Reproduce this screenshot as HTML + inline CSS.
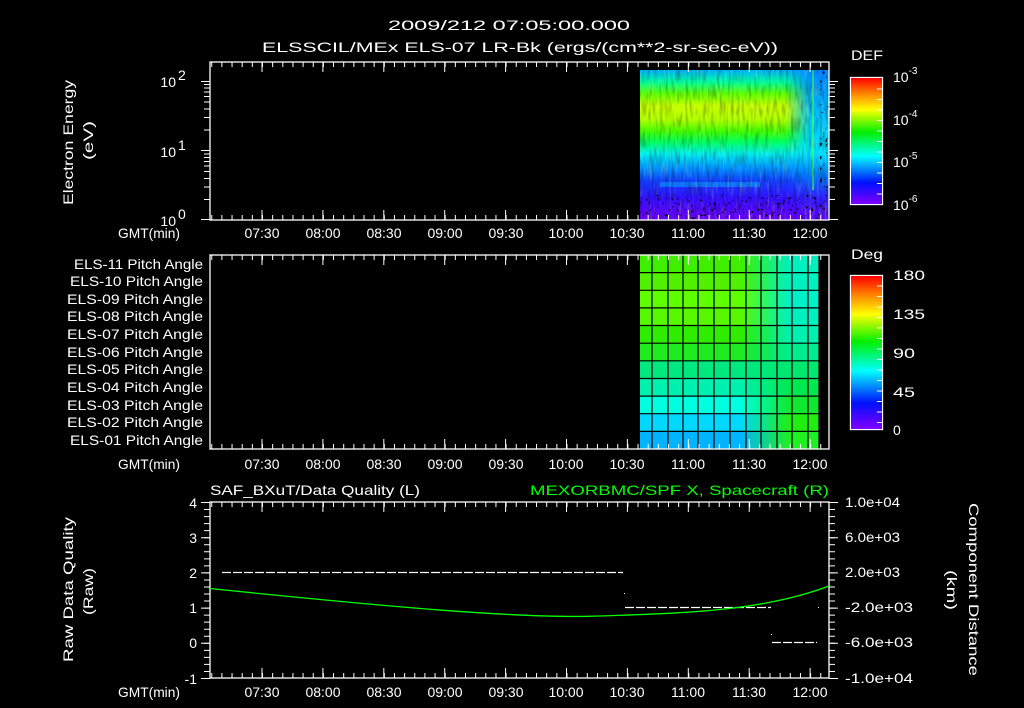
<!DOCTYPE html>
<html><head><meta charset="utf-8"><style>
html,body{margin:0;padding:0;background:#000;}
svg{display:block}
text{font-family:"Liberation Sans","DejaVu Sans",sans-serif;fill:#fff;font-size:14px}
</style></head><body>
<svg width="1024" height="708" viewBox="0 0 1024 708" xmlns="http://www.w3.org/2000/svg">
<defs>
<linearGradient id="cb" x1="0" y1="1" x2="0" y2="0">
<stop offset="0" stop-color="#8000ff"/><stop offset="0.17" stop-color="#0010ff"/>
<stop offset="0.38" stop-color="#00ffff"/><stop offset="0.57" stop-color="#00f000"/>
<stop offset="0.75" stop-color="#ffff00"/><stop offset="0.88" stop-color="#ff8000"/>
<stop offset="1" stop-color="#ff0000"/></linearGradient>
<linearGradient id="sg" x1="0" y1="0" x2="0" y2="1">
<stop offset="0" stop-color="#00b0ff"/><stop offset="0.08" stop-color="#00ffa0"/>
<stop offset="0.16" stop-color="#60ff00"/><stop offset="0.24" stop-color="#c8ff00"/>
<stop offset="0.33" stop-color="#b0ff00"/><stop offset="0.41" stop-color="#40ff00"/>
<stop offset="0.48" stop-color="#00ff60"/><stop offset="0.56" stop-color="#00f0f0"/>
<stop offset="0.64" stop-color="#00a0ff"/><stop offset="0.74" stop-color="#1040ff"/>
<stop offset="0.85" stop-color="#3010ff"/><stop offset="1" stop-color="#7000ff"/></linearGradient>
<linearGradient id="sgr" x1="0" y1="0" x2="0" y2="1">
<stop offset="0" stop-color="#0080ff"/><stop offset="0.3" stop-color="#00c0ff"/>
<stop offset="0.55" stop-color="#00e0ff"/><stop offset="0.7" stop-color="#0080ff"/>
<stop offset="0.85" stop-color="#3020ff"/><stop offset="1" stop-color="#6000ff"/></linearGradient>
<linearGradient id="fade" x1="0" y1="0" x2="1" y2="0">
<stop offset="0" stop-color="#fff" stop-opacity="0"/><stop offset="0.6" stop-color="#fff" stop-opacity="1"/></linearGradient>
<mask id="fm"><rect x="785" y="70" width="44" height="150" fill="url(#fade)"/></mask>
<filter id="nz" x="0" y="0" width="100%" height="100%">
<feTurbulence type="fractalNoise" baseFrequency="0.35 0.06" numOctaves="2" seed="3"/>
<feColorMatrix type="matrix" values="0 0 0 0 0  0 0 0 0 0  0 0 0 0 0  2 0 0 0 -0.9"/>
</filter>
<filter id="nz2" x="0" y="0" width="100%" height="100%">
<feTurbulence type="fractalNoise" baseFrequency="0.35 0.35" numOctaves="1" seed="9"/>
<feColorMatrix type="matrix" values="0 0 0 0 0  0 0 0 0 0  0 0 0 0 0  9 0 0 0 -5.6"/>
</filter>
<filter id="nz3" x="0" y="0" width="100%" height="100%">
<feTurbulence type="fractalNoise" baseFrequency="0.4 0.05" numOctaves="2" seed="5"/>
<feColorMatrix type="matrix" values="0 0 0 0 1  0 0 0 0 1  0 0 0 0 0.3  2.5 0 0 0 -1.4"/>
</filter>
<linearGradient id="pg0" x1="740" x2="790" gradientUnits="userSpaceOnUse"><stop offset="0" stop-color="#40ee00"/><stop offset="1" stop-color="#00f0c0"/></linearGradient>
<linearGradient id="pg1" x1="740" x2="790" gradientUnits="userSpaceOnUse"><stop offset="0" stop-color="#50f000"/><stop offset="1" stop-color="#00f0c0"/></linearGradient>
<linearGradient id="pg2" x1="740" x2="790" gradientUnits="userSpaceOnUse"><stop offset="0" stop-color="#60ff00"/><stop offset="1" stop-color="#00f0c8"/></linearGradient>
<linearGradient id="pg3" x1="740" x2="790" gradientUnits="userSpaceOnUse"><stop offset="0" stop-color="#58f800"/><stop offset="1" stop-color="#00f0c0"/></linearGradient>
<linearGradient id="pg4" x1="740" x2="790" gradientUnits="userSpaceOnUse"><stop offset="0" stop-color="#30ec00"/><stop offset="1" stop-color="#00f0b0"/></linearGradient>
<linearGradient id="pg5" x1="740" x2="790" gradientUnits="userSpaceOnUse"><stop offset="0" stop-color="#20ea20"/><stop offset="1" stop-color="#00ec90"/></linearGradient>
<linearGradient id="pg6" x1="740" x2="790" gradientUnits="userSpaceOnUse"><stop offset="0" stop-color="#00e880"/><stop offset="1" stop-color="#00e870"/></linearGradient>
<linearGradient id="pg7" x1="740" x2="790" gradientUnits="userSpaceOnUse"><stop offset="0" stop-color="#00f0b0"/><stop offset="1" stop-color="#00e850"/></linearGradient>
<linearGradient id="pg8" x1="740" x2="790" gradientUnits="userSpaceOnUse"><stop offset="0" stop-color="#00ffe0"/><stop offset="1" stop-color="#10e830"/></linearGradient>
<linearGradient id="pg9" x1="740" x2="790" gradientUnits="userSpaceOnUse"><stop offset="0" stop-color="#00d8ff"/><stop offset="1" stop-color="#20ee10"/></linearGradient>
<linearGradient id="pg10" x1="740" x2="790" gradientUnits="userSpaceOnUse"><stop offset="0" stop-color="#00b4ff"/><stop offset="1" stop-color="#20f020"/></linearGradient>
</defs>
<rect width="1024" height="708" fill="#000"/>

<!-- spectrogram -->
<rect x="640" y="70" width="189" height="150" fill="url(#sg)"/>
<rect x="785" y="70" width="44" height="150" fill="url(#sgr)" mask="url(#fm)"/>
<rect x="660" y="182" width="100" height="5" fill="#00c0ff" opacity="0.45"/>
<rect x="812" y="70" width="2" height="120" fill="#30ff60" opacity="0.7"/>
<rect x="640" y="70" width="189" height="150" filter="url(#nz3)" opacity="0.3"/>
<rect x="640" y="70" width="189" height="150" filter="url(#nz)" opacity="0.35"/>
<rect x="640" y="195" width="189" height="25" filter="url(#nz2)"/>
<rect x="820" y="70" width="9" height="150" filter="url(#nz2)"/>

<!-- pitch cells -->
<rect x="640" y="255" width="179" height="18.1" fill="url(#pg0)"/>
<rect x="640" y="272.6" width="179" height="18.1" fill="url(#pg1)"/>
<rect x="640" y="290.3" width="179" height="18.1" fill="url(#pg2)"/>
<rect x="640" y="307.9" width="179" height="18.1" fill="url(#pg3)"/>
<rect x="640" y="325.5" width="179" height="18.1" fill="url(#pg4)"/>
<rect x="640" y="343.2" width="179" height="18.1" fill="url(#pg5)"/>
<rect x="640" y="360.8" width="179" height="18.1" fill="url(#pg6)"/>
<rect x="640" y="378.5" width="179" height="18.1" fill="url(#pg7)"/>
<rect x="640" y="396.1" width="179" height="18.1" fill="url(#pg8)"/>
<rect x="640" y="413.7" width="179" height="18.1" fill="url(#pg9)"/>
<rect x="640" y="431.4" width="179" height="17.6" fill="url(#pg10)"/>
<g stroke="#000" stroke-width="1.2">
<path d="M640 272.6H819M640 290.3H819M640 307.9H819M640 325.5H819M640 343.2H819M640 360.8H819M640 378.5H819M640 396.1H819M640 413.7H819M640 431.4H819"/>
<path d="M652 255V449M668 255V449M683 255V449M698 255V449M714 255V449M730 255V449M746 255V449M761 255V449M777 255V449M792 255V449M808 255V449M819 255V449"/>
</g>

<!-- time ticks -->
<g stroke="#fff" fill="none">
<g stroke-dasharray="1 9.15" stroke-width="5">
<line x1="211.25" y1="64.5" x2="829" y2="64.5"/><line x1="211.25" y1="217.5" x2="829" y2="217.5"/>
<line x1="211.25" y1="257.5" x2="829" y2="257.5"/><line x1="211.25" y1="446.5" x2="829" y2="446.5"/>
<line x1="211.25" y1="504.5" x2="829" y2="504.5"/><line x1="211.25" y1="675.5" x2="829" y2="675.5"/>
</g>
<g stroke-dasharray="1 59.9" stroke-width="10">
<line x1="261.5" y1="67" x2="829" y2="67"/><line x1="261.5" y1="215" x2="829" y2="215"/>
<line x1="261.5" y1="260" x2="829" y2="260"/><line x1="261.5" y1="444" x2="829" y2="444"/>
<line x1="261.5" y1="507" x2="829" y2="507"/><line x1="261.5" y1="673" x2="829" y2="673"/>
</g>
<path stroke-width="1" d="M201 81.5H210M204 84.5H210M204 88H210M204 92H210M204 96.5H210M204 102H210M204 109H210M204 117.5H210M204 130H210M201 150.5H210M204 154H210M204 157.5H210M204 161.5H210M204 166H210M204 171.5H210M204 178.5H210M204 187H210M204 199.5H210M201 219.5H210
M838 81.5H829M835 84.5H829M835 88H829M835 92H829M835 96.5H829M835 102H829M835 109H829M835 117.5H829M835 130H829M838 150.5H829M835 154H829M835 157.5H829M835 161.5H829M835 166H829M835 171.5H829M835 178.5H829M835 187H829M835 199.5H829M838 219.5H829"/>
<g stroke-dasharray="1 6.04" stroke-width="6">
<line x1="207" y1="502" x2="207" y2="679"/><line x1="832" y1="502" x2="832" y2="679"/>
</g>
<g stroke-dasharray="1 34.2" stroke-width="9">
<line x1="205.5" y1="502" x2="205.5" y2="679"/><line x1="833.5" y1="502" x2="833.5" y2="679"/>
</g>
</g>

<!-- frames -->
<g stroke="#fff" fill="none" stroke-width="1.3">
<rect x="210" y="62" width="619" height="158"/>
<rect x="210" y="255" width="619" height="194"/>
<rect x="210" y="502" width="619" height="176"/>
<rect x="850.5" y="77.5" width="32" height="127"/>
<rect x="850.5" y="275.5" width="32" height="154"/>
</g>
<rect x="851" y="78" width="31" height="126" fill="url(#cb)"/>
<rect x="851" y="276" width="31" height="153" fill="url(#cb)"/>
<g stroke="#fff" stroke-dasharray="1 9.5" stroke-width="5">
<line x1="879.5" y1="88.5" x2="879.5" y2="204"/>
<line x1="879.5" y1="285.5" x2="879.5" y2="429"/>
</g>

<!-- bottom panel data -->
<g stroke="#fff" stroke-width="1.2">
<line x1="222" y1="572.5" x2="623" y2="572.5" stroke-dasharray="9,2"/>
<line x1="625" y1="607.5" x2="771" y2="607.5" stroke-dasharray="9,2"/>
<line x1="772" y1="642.5" x2="817" y2="642.5" stroke-dasharray="9,2"/>
</g>
<rect x="624" y="593" width="1" height="1" fill="#fff"/>
<rect x="771" y="634" width="1" height="1" fill="#fff"/>
<rect x="818" y="607" width="1" height="1" fill="#fff"/>
<path d="M210 588.5 C 380 606, 520 619, 600 616 C 680 613, 760 612, 829 586" stroke="#00ff00" stroke-width="1.3" fill="none"/>

<!-- titles -->
<text x="388" y="30" font-size="16" textLength="242" lengthAdjust="spacingAndGlyphs">2009/212 07:05:00.000</text>
<text x="262" y="52" font-size="16" textLength="516" lengthAdjust="spacingAndGlyphs">ELSSCIL/MEx ELS-07 LR-Bk  (ergs/(cm**2-sr-sec-eV))</text>
<text x="851" y="60" font-size="16" textLength="32" lengthAdjust="spacingAndGlyphs">DEF</text>
<text x="851" y="259" font-size="16" textLength="32" lengthAdjust="spacingAndGlyphs">Deg</text>
<g font-size="16">
<text x="893" y="82">10<tspan font-size="10" dy="-8">-3</tspan></text>
<text x="893" y="125">10<tspan font-size="10" dy="-8">-4</tspan></text>
<text x="893" y="167">10<tspan font-size="10" dy="-8">-5</tspan></text>
<text x="893" y="210">10<tspan font-size="10" dy="-8">-6</tspan></text>
<text x="893" y="280" textLength="32" lengthAdjust="spacingAndGlyphs">180</text>
<text x="893" y="319" textLength="32" lengthAdjust="spacingAndGlyphs">135</text>
<text x="893" y="358" textLength="22" lengthAdjust="spacingAndGlyphs">90</text>
<text x="893" y="397" textLength="22" lengthAdjust="spacingAndGlyphs">45</text>
<text x="893" y="435">0</text>
</g>
<g font-size="14">
<text x="176" y="87" text-anchor="end">10</text><text x="178" y="80" font-size="9">2</text>
<text x="176" y="157" text-anchor="end">10</text><text x="178" y="150" font-size="9">1</text>
<text x="176" y="226" text-anchor="end">10</text><text x="178" y="219" font-size="9">0</text>
</g>
<text transform="translate(73,205) rotate(-90)" font-size="15" textLength="125" lengthAdjust="spacingAndGlyphs">Electron Energy</text>
<text transform="translate(93,160) rotate(-90)" font-size="15" textLength="39" lengthAdjust="spacingAndGlyphs">(eV)</text>
<g font-size="14">
<text x="74" y="269" textLength="129" lengthAdjust="spacingAndGlyphs">ELS-11 Pitch Angle</text>
<text x="70" y="286" textLength="133" lengthAdjust="spacingAndGlyphs">ELS-10 Pitch Angle</text>
<text x="67" y="304" textLength="136" lengthAdjust="spacingAndGlyphs">ELS-09 Pitch Angle</text>
<text x="67" y="321" textLength="136" lengthAdjust="spacingAndGlyphs">ELS-08 Pitch Angle</text>
<text x="67" y="339" textLength="136" lengthAdjust="spacingAndGlyphs">ELS-07 Pitch Angle</text>
<text x="67" y="357" textLength="136" lengthAdjust="spacingAndGlyphs">ELS-06 Pitch Angle</text>
<text x="67" y="374" textLength="136" lengthAdjust="spacingAndGlyphs">ELS-05 Pitch Angle</text>
<text x="67" y="392" textLength="136" lengthAdjust="spacingAndGlyphs">ELS-04 Pitch Angle</text>
<text x="67" y="410" textLength="136" lengthAdjust="spacingAndGlyphs">ELS-03 Pitch Angle</text>
<text x="67" y="427" textLength="136" lengthAdjust="spacingAndGlyphs">ELS-02 Pitch Angle</text>
<text x="70" y="445" textLength="133" lengthAdjust="spacingAndGlyphs">ELS-01 Pitch Angle</text>
</g>
<g font-size="15">
<text x="118" y="238" textLength="62" lengthAdjust="spacingAndGlyphs">GMT(min)</text>
<text x="118" y="469" textLength="62" lengthAdjust="spacingAndGlyphs">GMT(min)</text>
<text x="118" y="697" textLength="62" lengthAdjust="spacingAndGlyphs">GMT(min)</text>
</g>
<g font-size="15" text-anchor="middle">
<text x="262" y="238">07:30</text><text x="323" y="238">08:00</text><text x="384" y="238">08:30</text><text x="445" y="238">09:00</text><text x="506" y="238">09:30</text><text x="566" y="238">10:00</text><text x="627" y="238">10:30</text><text x="688" y="238">11:00</text><text x="749" y="238">11:30</text><text x="810" y="238">12:00</text>
<text x="262" y="469">07:30</text><text x="323" y="469">08:00</text><text x="384" y="469">08:30</text><text x="445" y="469">09:00</text><text x="506" y="469">09:30</text><text x="566" y="469">10:00</text><text x="627" y="469">10:30</text><text x="688" y="469">11:00</text><text x="749" y="469">11:30</text><text x="810" y="469">12:00</text>
<text x="262" y="697">07:30</text><text x="323" y="697">08:00</text><text x="384" y="697">08:30</text><text x="445" y="697">09:00</text><text x="506" y="697">09:30</text><text x="566" y="697">10:00</text><text x="627" y="697">10:30</text><text x="688" y="697">11:00</text><text x="749" y="697">11:30</text><text x="810" y="697">12:00</text>
</g>
<text x="210" y="495" font-size="16" textLength="210" lengthAdjust="spacingAndGlyphs">SAF_BXuT/Data Quality (L)</text>
<text x="530" y="495" font-size="16" textLength="299" lengthAdjust="spacingAndGlyphs" style="fill:#00ff00">MEXORBMC/SPF X, Spacecraft (R)</text>
<g font-size="15" text-anchor="end">
<text x="197" y="508">4</text><text x="197" y="543">3</text><text x="197" y="578">2</text><text x="197" y="613">1</text><text x="197" y="648">0</text><text x="197" y="684">-1</text>
</g>
<g font-size="14">
<text x="845" y="507" textLength="55" lengthAdjust="spacingAndGlyphs">1.0e+04</text>
<text x="845" y="542" textLength="55" lengthAdjust="spacingAndGlyphs">6.0e+03</text>
<text x="845" y="577" textLength="55" lengthAdjust="spacingAndGlyphs">2.0e+03</text>
<text x="845" y="612" textLength="68" lengthAdjust="spacingAndGlyphs">-2.0e+03</text>
<text x="845" y="647" textLength="68" lengthAdjust="spacingAndGlyphs">-6.0e+03</text>
<text x="845" y="683" textLength="68" lengthAdjust="spacingAndGlyphs">-1.0e+04</text>
</g>
<text transform="translate(73,662) rotate(-90)" font-size="15" textLength="145" lengthAdjust="spacingAndGlyphs">Raw Data Quality</text>
<text transform="translate(93,615) rotate(-90)" font-size="15" textLength="47" lengthAdjust="spacingAndGlyphs">(Raw)</text>
<text transform="translate(969,503) rotate(90)" font-size="15" textLength="173" lengthAdjust="spacingAndGlyphs">Component Distance</text>
<text transform="translate(947,570) rotate(90)" font-size="15" textLength="40" lengthAdjust="spacingAndGlyphs">(km)</text>
</svg>
</body></html>
